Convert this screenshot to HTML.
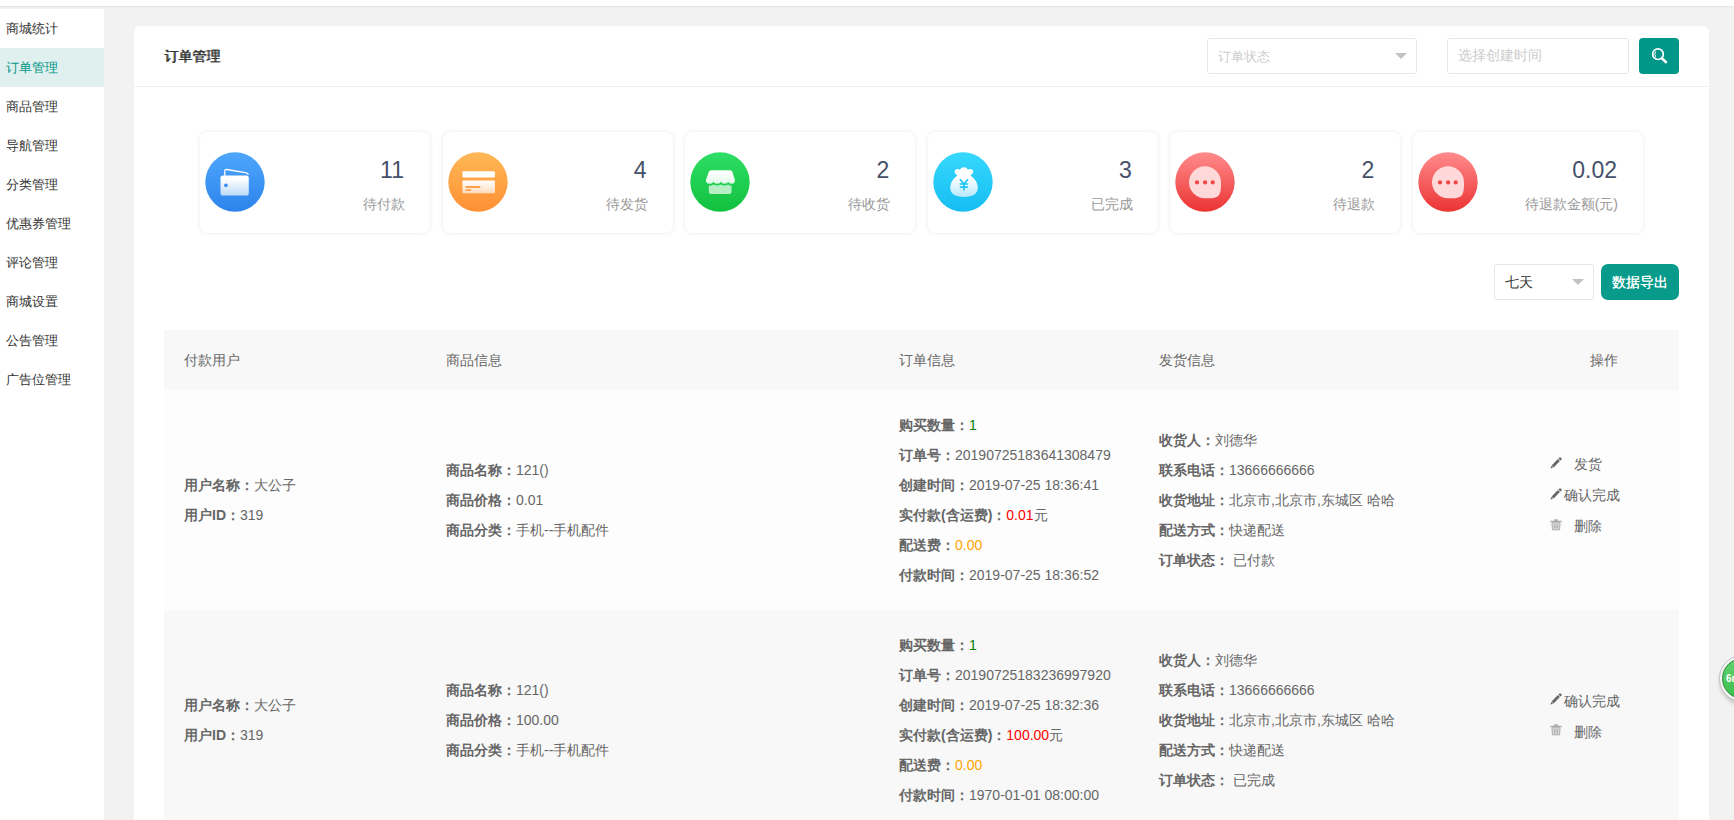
<!DOCTYPE html>
<html><head><meta charset="utf-8">
<style>
*{box-sizing:border-box;margin:0;padding:0}
html,body{width:1734px;height:820px;overflow:hidden}
body{background:#f2f2f2;font-family:"Liberation Sans",sans-serif;font-size:14px;color:#333;position:relative}
.a{position:absolute}
.topbar{left:0;top:0;width:1734px;height:6px;background:#fff;box-shadow:0 1px 2px rgba(0,0,0,.06)}
.side{left:0;top:9px;width:104px;height:811px;background:#fff}
.side div{height:39px;line-height:39px;padding-left:6px;font-size:13px;color:#333;white-space:nowrap}
.side div.on{background:#dff0ee;color:#009688}
.card{left:134px;top:26px;width:1575px;height:820px;background:#fff;border-radius:6px}
.hd{left:134px;top:86px;width:1575px;height:1px;background:#f0f0f0}
.title{left:164px;top:46px;font-size:14px;line-height:20px;color:#333;text-shadow:0.5px 0 0 #333}
.inp{border:1px solid #e6e6e6;border-radius:3px;background:#fff;color:#ccc;line-height:33px;padding-left:10px;white-space:nowrap}
.tri{width:0;height:0;border-left:6px solid transparent;border-right:6px solid transparent;border-top:6px solid #c2c2c2}
.btn{background:#009688;border-radius:2px;color:#fff}
.stat{top:132px;width:230px;height:101px;background:#fff;border-radius:7px;box-shadow:0 0 4px rgba(0,0,0,.09)}
.stat svg{position:absolute;left:5px;top:20px}
.num{right:26px;top:25px;font-size:23px;line-height:26px;color:#45506a;text-align:right}
.lab{right:25px;top:63px;font-size:14px;line-height:18px;color:#999;text-align:right;white-space:nowrap}
.th{left:164px;top:330px;width:1515px;height:60px;background:#f8f8f8}
.tht{top:350px;line-height:20px;color:#666;white-space:nowrap}
.row{left:164px;width:1515px;height:220px}
.ln{position:absolute;line-height:20px;white-space:nowrap;color:#666}
.ln b{font-weight:bold}
.g{color:green}.r{color:red}.o{color:orange}
</style></head><body>
<div class="a topbar"></div>
<div class="a side">
<div>商城统计</div><div class="on">订单管理</div><div>商品管理</div><div>导航管理</div><div>分类管理</div><div>优惠券管理</div><div>评论管理</div><div>商城设置</div><div>公告管理</div><div>广告位管理</div>
</div>
<div class="a card"></div>
<div class="a hd"></div>
<div class="a title">订单管理</div>
<div class="a inp" style="left:1207px;top:38px;width:210px;height:36px;font-size:13px;line-height:35px">订单状态<div class="a tri" style="left:187px;top:14px"></div></div>
<div class="a inp" style="left:1447px;top:38px;width:182px;height:36px">选择创建时间</div>
<div class="a btn" style="left:1639px;top:38px;width:40px;height:36px;border-radius:4px"><svg class="a" style="left:0;top:0" width="40" height="36" viewBox="0 0 40 36"><circle cx="19" cy="16.2" r="5.3" fill="none" stroke="#fff" stroke-width="1.7"/><path d="M16.6 13.6 Q15 16.2 16.6 18.8" fill="none" stroke="#fff" stroke-width="1"/><path d="M23.2 20.6 L27 24.2" stroke="#fff" stroke-width="2.6" stroke-linecap="round"/></svg></div>

<!-- STATS -->
<svg width="0" height="0" style="position:absolute"><defs>
<linearGradient id="gb" x1="0" y1="0" x2="0" y2="1"><stop offset="0" stop-color="#4ea7fc"/><stop offset="1" stop-color="#2c83eb"/></linearGradient>
<linearGradient id="go" x1="0" y1="0" x2="0" y2="1"><stop offset="0" stop-color="#ffb856"/><stop offset="1" stop-color="#ff9034"/></linearGradient>
<linearGradient id="gg" x1="0" y1="0" x2="0" y2="1"><stop offset="0" stop-color="#2ede66"/><stop offset="1" stop-color="#12c13e"/></linearGradient>
<linearGradient id="gc" x1="0" y1="0" x2="0" y2="1"><stop offset="0" stop-color="#36d8fc"/><stop offset="1" stop-color="#15bdf2"/></linearGradient>
<linearGradient id="gr" x1="0" y1="0" x2="0" y2="1"><stop offset="0" stop-color="#ff8c8c"/><stop offset="1" stop-color="#ec3333"/></linearGradient>
<linearGradient id="wb" x1="0" y1="0" x2="0" y2="1"><stop offset="0.15" stop-color="#fff"/><stop offset="1" stop-color="#bcdaf9"/></linearGradient>
<linearGradient id="wo" x1="0" y1="0" x2="0" y2="1"><stop offset="0" stop-color="#fff"/><stop offset="1" stop-color="#fddcbd"/></linearGradient>
<linearGradient id="wg" x1="0" y1="0" x2="0" y2="1"><stop offset="0.2" stop-color="#fff"/><stop offset="1" stop-color="#def7e6"/></linearGradient>
<linearGradient id="wc" x1="0" y1="0" x2="0" y2="1"><stop offset="0.35" stop-color="#fff"/><stop offset="1" stop-color="#b5e9fb"/></linearGradient>
</defs></svg>
<div class="a stat" style="left:200px"><svg width="60" height="60" viewBox="0 0 60 60"><circle cx="30" cy="30" r="29.7" fill="url(#gb)"/><path d="M19.8 23.8 V19.2 Q19.8 17.2 21.8 17.5 L41.6 20.9 Q43.2 21.2 43.2 23" fill="none" stroke="#fff" stroke-width="1.3"/><rect x="15.5" y="23.6" width="28.3" height="20" rx="2.6" fill="url(#wb)"/><circle cx="20.9" cy="33.3" r="1.9" fill="#3a90f1"/></svg><div class="a num">11</div><div class="a lab">待付款</div></div>
<div class="a stat" style="left:442.6px"><svg width="60" height="60" viewBox="0 0 60 60"><circle cx="30" cy="30" r="29.7" fill="url(#go)"/><rect x="14.5" y="19.3" width="32.4" height="6.1" rx="1" fill="#fff"/><rect x="14.5" y="28.5" width="32.4" height="12.7" rx="0.8" fill="url(#wo)"/><rect x="17.4" y="34.1" width="15.1" height="1.8" rx=".9" fill="#ffa04a"/><rect x="17.4" y="37.3" width="6" height="1.6" rx=".8" fill="#ffa04a"/></svg><div class="a num">4</div><div class="a lab">待发货</div></div>
<div class="a stat" style="left:685.2px"><svg width="60" height="60" viewBox="0 0 60 60"><circle cx="30" cy="30" r="29.7" fill="url(#gg)"/><path d="M21 18.3 H40.3 Q41.8 18.3 42.3 19.8 L44.8 27.6 Q45.4 31.8 41.6 31.8 Q38.8 31.8 38.2 29.8 Q37.6 31.8 34.6 31.8 Q31.6 31.8 30.9 29.8 Q30.2 31.8 27.2 31.8 Q24.2 31.8 23.5 29.8 Q22.9 31.8 20 31.8 Q15.3 31.8 16 27.6 L18.9 19.8 Q19.5 18.3 21 18.3 Z" fill="url(#wg)"/><path d="M18.8 33.6 Q20.6 34.4 23.5 32.4 Q26.6 34.4 30.9 32.4 Q34.4 34.4 38.2 32.4 Q40.4 34 41.6 33.6 V39.5 Q41.6 42 39.1 42 H21.3 Q18.8 42 18.8 39.5 Z" fill="#fff" fill-opacity=".68"/></svg><div class="a num">2</div><div class="a lab">待收货</div></div>
<div class="a stat" style="left:927.8px"><svg width="60" height="60" viewBox="0 0 60 60"><circle cx="30" cy="30" r="29.7" fill="url(#gc)"/><path d="M24.4 23.4 Q21.6 21.8 21.6 19.8 Q21.6 17 24.6 17 Q25.9 17 26.9 17.7 Q27.8 15.3 30.9 15.3 Q34 15.3 34.9 17.7 Q35.9 17 37.2 17 Q40.2 17 40.2 19.8 Q40.2 21.8 37.4 23.4 Q44.8 28.5 44.8 35.6 Q44.8 45 31 45 Q17.2 45 17.2 35.6 Q17.2 28.5 24.4 23.4 Z" fill="url(#wc)"/><path d="M26.9 27.3 L30.9 32 L34.9 27.3 M26.6 32 H35.2 M26.9 35.2 H34.9 M30.9 32 V38.6" fill="none" stroke="#1ec5f5" stroke-width="1.7"/></svg><div class="a num">3</div><div class="a lab">已完成</div></div>
<div class="a stat" style="left:1170.4px"><svg width="60" height="60" viewBox="0 0 60 60"><circle cx="30" cy="30" r="29.7" fill="url(#gr)"/><path d="M14 30.3 A16 16 0 1 1 46 30.3 C46 37.5 45.6 41 43.6 43.4 C41.2 46 37.5 46.3 30 46.3 A16 16 0 0 1 14 30.3 Z" fill="#ffd9d9"/><circle cx="22" cy="30.4" r="2.1" fill="#f04646"/><circle cx="30.1" cy="30.4" r="2.1" fill="#f04646"/><circle cx="37.7" cy="30.4" r="2.1" fill="#f04646"/></svg><div class="a num">2</div><div class="a lab">待退款</div></div>
<div class="a stat" style="left:1413px"><svg width="60" height="60" viewBox="0 0 60 60"><circle cx="30" cy="30" r="29.7" fill="url(#gr)"/><path d="M14 30.3 A16 16 0 1 1 46 30.3 C46 37.5 45.6 41 43.6 43.4 C41.2 46 37.5 46.3 30 46.3 A16 16 0 0 1 14 30.3 Z" fill="#ffd9d9"/><circle cx="22" cy="30.4" r="2.1" fill="#f04646"/><circle cx="30.1" cy="30.4" r="2.1" fill="#f04646"/><circle cx="37.7" cy="30.4" r="2.1" fill="#f04646"/></svg><div class="a num">0.02</div><div class="a lab">待退款金额(元)</div></div>
<!-- FILTER -->
<div class="a inp" style="left:1494px;top:264px;width:100px;height:36px;color:#333;line-height:34px">七天<div class="a tri" style="left:77px;top:14px"></div></div>
<div class="a btn" style="left:1601px;top:264px;width:78px;height:36px;border-radius:7px;text-align:center;line-height:37px;background:#089a8a;text-shadow:0.4px 0 0 #fff">数据导出</div>

<!-- TABLE -->
<div class="a th"></div>
<div class="a tht" style="left:184px">付款用户</div>
<div class="a tht" style="left:446px">商品信息</div>
<div class="a tht" style="left:899px">订单信息</div>
<div class="a tht" style="left:1159px">发货信息</div>
<div class="a tht" style="left:1590px">操作</div>

<div class="a row" style="top:390px;background:#fdfdfd"></div>
<div class="a row" style="top:610px;background:#f8f8f8"></div>
<div class="ln" style="left:184px;top:475px"><b>用户名称：</b>大公子</div>
<div class="ln" style="left:184px;top:505px"><b>用户ID：</b>319</div>
<div class="ln" style="left:446px;top:460px"><b>商品名称：</b>121()</div>
<div class="ln" style="left:446px;top:490px"><b>商品价格：</b>0.01</div>
<div class="ln" style="left:446px;top:520px"><b>商品分类：</b>手机--手机配件</div>
<div class="ln" style="left:899px;top:415px"><b>购买数量：</b><span class="g">1</span></div>
<div class="ln" style="left:899px;top:445px"><b>订单号：</b>20190725183641308479</div>
<div class="ln" style="left:899px;top:475px"><b>创建时间：</b>2019-07-25 18:36:41</div>
<div class="ln" style="left:899px;top:505px"><b>实付款(含运费)：</b><span class="r">0.01</span>元</div>
<div class="ln" style="left:899px;top:535px"><b>配送费：</b><span class="o">0.00</span></div>
<div class="ln" style="left:899px;top:565px"><b>付款时间：</b>2019-07-25 18:36:52</div>
<div class="ln" style="left:1159px;top:430px"><b>收货人：</b>刘德华</div>
<div class="ln" style="left:1159px;top:460px"><b>联系电话：</b>13666666666</div>
<div class="ln" style="left:1159px;top:490px"><b>收货地址：</b>北京市,北京市,东城区 哈哈</div>
<div class="ln" style="left:1159px;top:520px"><b>配送方式：</b>快递配送</div>
<div class="ln" style="left:1159px;top:550px"><b>订单状态：</b>&nbsp;已付款</div>
<svg class="a" style="left:1550px;top:456.5px" width="12" height="12" viewBox="0 0 12 12"><path d="M1.6 8.4 L7.9 2.1 L9.9 4.1 L3.6 10.4 Z M1.3 8.9 L3.1 10.7 L0.4 11.6 Z M8.4 1.6 L9.6 0.4 Q10.1 0 10.6 0.4 L11.6 1.4 Q12 1.9 11.6 2.4 L10.4 3.6 Z" fill="#666"/></svg><div class="ln" style="left:1574px;top:454.0px">发货</div>
<svg class="a" style="left:1550px;top:487.5px" width="12" height="12" viewBox="0 0 12 12"><path d="M1.6 8.4 L7.9 2.1 L9.9 4.1 L3.6 10.4 Z M1.3 8.9 L3.1 10.7 L0.4 11.6 Z M8.4 1.6 L9.6 0.4 Q10.1 0 10.6 0.4 L11.6 1.4 Q12 1.9 11.6 2.4 L10.4 3.6 Z" fill="#666"/></svg><div class="ln" style="left:1564px;top:485.0px">确认完成</div>
<svg class="a" style="left:1550px;top:518.5px" width="12" height="12" viewBox="0 0 12 12"><path d="M0.3 1.7 H11.7 V3.3 H0.3 Z M4.2 0.3 H7.8 V1.7 H4.2 Z" fill="#aaa"/><path d="M2 3.8 H10 L9.6 10.8 H2.4 Z" fill="#e2e2e2" stroke="#aaa" stroke-width="1"/><path d="M4.3 5.2 V9.6 M6 5.2 V9.6 M7.7 5.2 V9.6" stroke="#aaa" stroke-width="1"/></svg><div class="ln" style="left:1574px;top:516.0px">删除</div>
<div class="ln" style="left:184px;top:695px"><b>用户名称：</b>大公子</div>
<div class="ln" style="left:184px;top:725px"><b>用户ID：</b>319</div>
<div class="ln" style="left:446px;top:680px"><b>商品名称：</b>121()</div>
<div class="ln" style="left:446px;top:710px"><b>商品价格：</b>100.00</div>
<div class="ln" style="left:446px;top:740px"><b>商品分类：</b>手机--手机配件</div>
<div class="ln" style="left:899px;top:635px"><b>购买数量：</b><span class="g">1</span></div>
<div class="ln" style="left:899px;top:665px"><b>订单号：</b>20190725183236997920</div>
<div class="ln" style="left:899px;top:695px"><b>创建时间：</b>2019-07-25 18:32:36</div>
<div class="ln" style="left:899px;top:725px"><b>实付款(含运费)：</b><span class="r">100.00</span>元</div>
<div class="ln" style="left:899px;top:755px"><b>配送费：</b><span class="o">0.00</span></div>
<div class="ln" style="left:899px;top:785px"><b>付款时间：</b>1970-01-01 08:00:00</div>
<div class="ln" style="left:1159px;top:650px"><b>收货人：</b>刘德华</div>
<div class="ln" style="left:1159px;top:680px"><b>联系电话：</b>13666666666</div>
<div class="ln" style="left:1159px;top:710px"><b>收货地址：</b>北京市,北京市,东城区 哈哈</div>
<div class="ln" style="left:1159px;top:740px"><b>配送方式：</b>快递配送</div>
<div class="ln" style="left:1159px;top:770px"><b>订单状态：</b>&nbsp;已完成</div>
<svg class="a" style="left:1550px;top:693.0px" width="12" height="12" viewBox="0 0 12 12"><path d="M1.6 8.4 L7.9 2.1 L9.9 4.1 L3.6 10.4 Z M1.3 8.9 L3.1 10.7 L0.4 11.6 Z M8.4 1.6 L9.6 0.4 Q10.1 0 10.6 0.4 L11.6 1.4 Q12 1.9 11.6 2.4 L10.4 3.6 Z" fill="#666"/></svg><div class="ln" style="left:1564px;top:690.5px">确认完成</div>
<svg class="a" style="left:1550px;top:724.0px" width="12" height="12" viewBox="0 0 12 12"><path d="M0.3 1.7 H11.7 V3.3 H0.3 Z M4.2 0.3 H7.8 V1.7 H4.2 Z" fill="#aaa"/><path d="M2 3.8 H10 L9.6 10.8 H2.4 Z" fill="#e2e2e2" stroke="#aaa" stroke-width="1"/><path d="M4.3 5.2 V9.6 M6 5.2 V9.6 M7.7 5.2 V9.6" stroke="#aaa" stroke-width="1"/></svg><div class="ln" style="left:1574px;top:721.5px">删除</div>
<div class="a" style="left:1719px;top:655px;width:47px;height:47px;border-radius:50%;background:#f6f6f6;border:1px solid #c4c4c4;box-shadow:1px 3px 4px rgba(0,0,0,.22)"><div class="a" style="left:2px;top:2px;width:41px;height:41px;border-radius:50%;background:linear-gradient(#62d46f,#3dbd4d);border:1px solid #23893a;color:#fff;font-weight:bold;font-size:10px;line-height:39px;padding-left:3px">6m</div></div>
</body></html>
